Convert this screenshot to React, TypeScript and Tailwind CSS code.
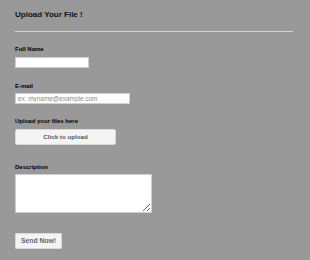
import React from "react";

export default function App() {
  return (
    <div className="min-h-screen bg-[#999999] pl-[15px] pr-[17px] pt-[10px] font-['Liberation_Sans',Arial,sans-serif]">
      {/* Heading */}
      <h1 className="text-[8px] font-bold leading-[10px] text-[#111]">Upload Your File !</h1>
      <hr className="mt-[11px] border-0 border-t border-[#d2d2d2]" />

      <form className="flex flex-col items-start" onSubmit={(e) => e.preventDefault()}>
        <label className="mt-[14px] text-[6px] font-bold leading-[7px] text-black">Full Name</label>
        <input
          type="text"
          className="mt-[4px] h-[11px] w-[74px] border border-[#cfcfcf] bg-white outline-none"
        />

        <label className="mt-[15px] text-[6px] font-bold leading-[7px] text-black">E-mail</label>
        <input
          type="text"
          placeholder="ex: myname@example.com"
          className="mt-[3px] h-[11px] w-[115px] border border-[#cfcfcf] bg-white px-[2px] text-[6.4px] outline-none placeholder:text-[#8a8a8a]"
        />

        <label className="mt-[14px] text-[6px] font-bold leading-[7px] text-black">Upload your files here</label>
        <button
          type="button"
          className="mt-[4px] h-[16px] w-[101px] rounded-[2px] border border-[#d8d8d8] bg-[#f4f4f4] text-[6.2px] font-bold text-[#555]"
        >
          Click to upload
        </button>

        <label className="mt-[19px] text-[6px] font-bold leading-[7px] text-black">Description</label>
        <textarea className="mt-[3px] h-[39px] w-[137px] border border-[#cfcfcf] bg-white outline-none" />

        <button
          type="submit"
          className="mt-[20px] h-[16px] w-[47px] rounded-[1px] border border-[#d8d8d8] bg-[#f4f4f4] text-[6.8px] font-bold text-[#666]"
        >
          Send Now!
        </button>
      </form>
    </div>
  );
}
